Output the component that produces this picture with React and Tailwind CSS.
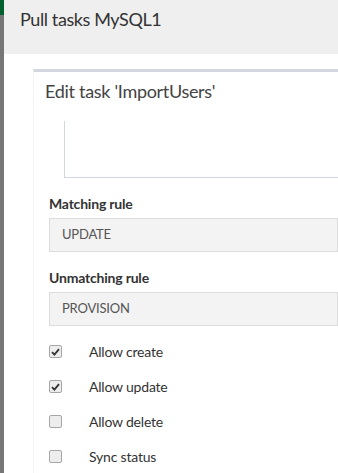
import React from "react";

const font = { fontFamily: "Lato, 'Open Sans', sans-serif" };

function Check({ checked }) {
  return (
    <span className="flex h-[13px] w-[13px] items-center justify-center rounded-[2px] border border-[#a6a6a6] bg-[#ededed]">
      {checked && (
        <svg width="9" height="8" viewBox="0 0 9 8">
          <path d="M1 4.2 L3.4 6.6 L8 1.2" fill="none" stroke="#333" strokeWidth="1.8" />
        </svg>
      )}
    </span>
  );
}

function Rule({ label, value }) {
  return (
    <div className="flex flex-col">
      <label className="h-[20px] text-[14px] font-bold leading-[20px] tracking-[-0.2px] text-[#333]">{label}</label>
      <div className="mt-[4px] flex h-[34px] items-center border border-[#dcdcdc] bg-[#f3f3f3] pl-[12px] text-[13px] tracking-[-0.2px] text-[#555]">
        {value}
      </div>
    </div>
  );
}

export default function App() {
  const opts = [
    ["Allow create", true],
    ["Allow update", true],
    ["Allow delete", false],
    ["Sync status", false],
  ];
  return (
    <div className="flex h-[473px] w-[338px] overflow-hidden bg-white" style={font}>
      <div className="flex w-[4px] flex-col">
        <div className="h-[15px] bg-[#00612e]" />
        <div className="flex-1 bg-[#767676]" />
      </div>
      <div className="flex flex-1 flex-col">
        <div className="h-[54px] shrink-0 bg-[#efefef] pl-[16px] pt-[6px] text-[18px] leading-[26px] tracking-[-0.4px] text-[#333]">
          Pull tasks MySQL1
        </div>
        <div className="flex-1 pl-[29px] pt-[15px]">
          <div className="h-full border-l border-t-[3px] border-l-[#f2f2f2] border-t-[#d2d6de]">
            <div className="pl-[11px] pt-[7px] text-[18px] leading-[24px] tracking-[-0.3px] text-[#444]">
              Edit task 'ImportUsers'
            </div>
            <div className="ml-[30px] mt-[18px] h-[57px] border-b border-l border-[#d2d6de]" />
            <div className="flex flex-col gap-[16px] pl-[15px] pt-[16px]">
              <Rule label="Matching rule" value="UPDATE" />
              <Rule label="Unmatching rule" value="PROVISION" />
            </div>
            <div className="flex flex-col pl-[15px] pt-[8px]">
              {opts.map(([t, c]) => (
                <div key={t} className="flex h-[35px] items-center">
                  <Check checked={c} />
                  <span className="ml-[27px] text-[14px] tracking-[-0.2px] text-[#333]">{t}</span>
                </div>
              ))}
            </div>
          </div>
        </div>
      </div>
    </div>
  );
}
